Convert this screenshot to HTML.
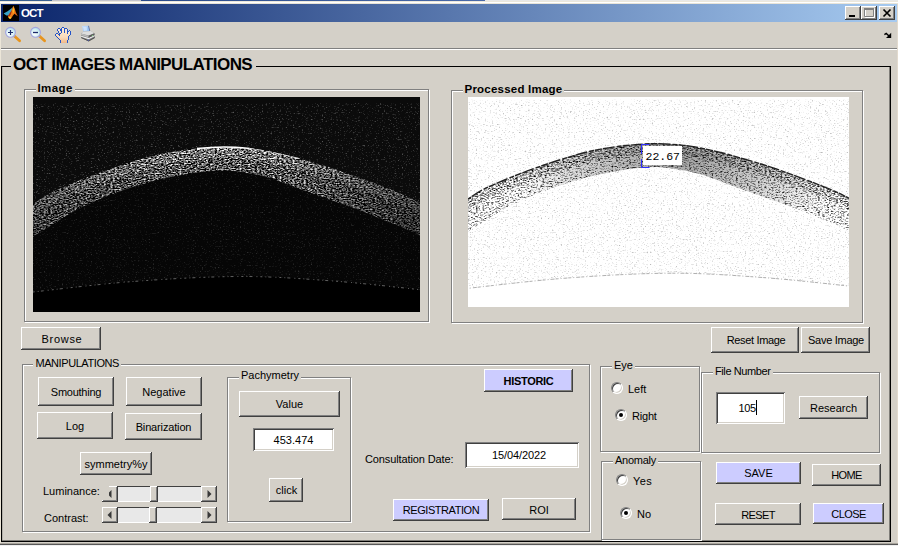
<!DOCTYPE html>
<html>
<head>
<meta charset="utf-8">
<title>OCT</title>
<style>
html,body{margin:0;padding:0;}
body{width:898px;height:546px;overflow:hidden;background:#d4d0c8;position:relative;font-family:"Liberation Sans",sans-serif;font-size:11px;color:#000;}
.abs{position:absolute;}
.btn{position:absolute;box-sizing:border-box;background:#d4d0c8;text-align:center;white-space:nowrap;
 box-shadow:inset -1px -1px 0 #404040, inset 1px 1px 0 #ffffff, inset -2px -2px 0 #808080;}
.btn span{position:absolute;left:0;right:0;text-align:center;}
.lav{background:#ccccff;}
.edit{position:absolute;box-sizing:border-box;background:#fff;text-align:center;white-space:nowrap;
 box-shadow:inset 1px 1px 0 #808080, inset -1px -1px 0 #ffffff, inset 2px 2px 0 #404040, inset -2px -2px 0 #d4d0c8;}
.grp{position:absolute;box-sizing:border-box;border:1px solid #808080;box-shadow:1px 1px 0 #fff, inset 1px 1px 0 #fff;}
.lbl{position:absolute;background:#d4d0c8;white-space:nowrap;line-height:13px;padding:0 2px;}
.txt{position:absolute;white-space:nowrap;line-height:13px;}
.radio{position:absolute;width:12px;height:12px;box-sizing:border-box;border-radius:50%;background:#fff;
 border:1px solid #808080;border-right-color:#fff;border-bottom-color:#fff;box-shadow:inset 1px 1px 0 #404040, inset -1px -1px 0 #d4d0c8;}
.radio.on::after{content:"";position:absolute;left:3px;top:3px;width:4px;height:4px;border-radius:50%;background:#000;}
.sl{position:absolute;height:16px;background:#e8e8e8;box-shadow:inset 0 1px 0 #404040, inset 0 -1px 0 #ffffff;}
.sb{position:absolute;top:0;width:16px;height:16px;box-sizing:border-box;background:#d4d0c8;box-shadow:inset -1px -1px 0 #404040, inset 1px 1px 0 #ffffff, inset -2px -2px 0 #808080;}
.th{position:absolute;top:0;width:8px;height:16px;box-sizing:border-box;background:#d4d0c8;box-shadow:inset -1px -1px 0 #404040, inset 1px 1px 0 #ffffff, inset -2px -2px 0 #808080;}
</style>
</head>
<body>
<!-- stray strip above window -->
<div class="abs" style="left:0;top:0;width:898px;height:1px;background:linear-gradient(to right,#3a6090 0,#3a6090 52px,#c4c4cc 52px,#c4c4cc 141px,#2a4a88 141px,#4a6aa8 485px,#e8e8e8 485px,#e8e8e8 898px);"></div>
<div class="abs" style="left:0;top:1px;width:898px;height:1px;background:#ece8dc;"></div>
<div class="abs" style="left:0;top:2px;width:898px;height:1px;background:#ffffff;"></div>
<div class="abs" style="left:0;top:3px;width:898px;height:1px;background:#e8e4d8;"></div>
<!-- title bar -->
<div class="abs" style="left:1px;top:4px;width:896px;height:18px;background:linear-gradient(to right,#0a246a 0%,#a6caf0 100%);"></div>
<div class="abs" style="left:0;top:4px;width:1px;height:542px;background:#ece6d8;"></div>
<div class="abs" style="left:897px;top:4px;width:1px;height:542px;background:#e2dace;"></div>
<svg class="abs" style="left:3px;top:5px;" width="16" height="16" viewBox="0 0 16 16">
<defs><linearGradient id="mo" x1="0" y1="0" x2="1" y2="1"><stop offset="0" stop-color="#c8401a"/><stop offset="0.5" stop-color="#f08418"/><stop offset="1" stop-color="#d04a10"/></linearGradient></defs>
<rect width="16" height="16" fill="#000"/>
<path d="M0.6,8.6 L4.6,6.2 L8.3,3.6 L9.6,2.2 L8.8,6.5 L5.6,10.6 L3.4,10.6 Z" fill="#38a4c8"/>
<path d="M4.8,10.9 L8,6.6 L10.3,0.8 L11.6,3.2 L12.8,7.2 L14.8,11.2 L13,9.9 L11.6,8.7 L10,10.6 L8.5,12.9 L7,13.9 L5.6,13 Z" fill="url(#mo)"/>
<path d="M10.3,1 L11,5 L10.4,8.8 L9.5,6 Z" fill="#fac028"/>
<path d="M5.6,12.3 L7,13.9 L8.3,13 L6.8,11.6 Z" fill="#fbd030"/>
<path d="M4.8,10.9 L8,6.6 L9,5 L8,9 L6.4,11.4 Z" fill="#9c2c10"/>
</svg>
<div class="txt" style="left:21px;top:6px;color:#fff;font-weight:bold;font-size:11.5px;line-height:14px;letter-spacing:-0.9px;">OCT</div>
<div class="btn" style="left:845px;top:6px;width:16px;height:14px;"></div>
<div class="abs" style="left:849px;top:15px;width:6px;height:2px;background:#000;"></div>
<div class="btn" style="left:861px;top:6px;width:16px;height:14px;"></div>
<svg class="abs" style="left:861px;top:6px;" width="16" height="14"><path d="M4.5,3.5 H13.5 V11.5 H4.5 Z M4,3 H14" fill="none" stroke="#fff" stroke-width="1"/><path d="M3.5,2.5 H12.5 V10.5 H3.5 Z" fill="none" stroke="#808080" stroke-width="1"/><rect x="3" y="2" width="10" height="2" fill="#808080"/></svg>
<div class="btn" style="left:879px;top:6px;width:16px;height:14px;"></div>
<svg class="abs" style="left:879px;top:6px;" width="16" height="14"><path d="M4.5,3.5 L11.5,10.5 M11.5,3.5 L4.5,10.5" fill="none" stroke="#000" stroke-width="1.7"/></svg>
<svg class="abs" style="left:0;top:24px;" width="100" height="22" viewBox="0 24 100 22">
<defs>
<radialGradient id="ln" cx="0.4" cy="0.65" r="0.7"><stop offset="0" stop-color="#ffffff"/><stop offset="0.6" stop-color="#d4f0f4"/><stop offset="1" stop-color="#a8dce8"/></radialGradient>
<linearGradient id="sk" x1="0" y1="0" x2="0" y2="1"><stop offset="0" stop-color="#fdebd6"/><stop offset="0.6" stop-color="#fbdcbc"/><stop offset="1" stop-color="#f0b888"/></linearGradient>
<linearGradient id="pp" x1="0" y1="0" x2="1" y2="1"><stop offset="0" stop-color="#c8e0fc"/><stop offset="1" stop-color="#88bcf4"/></linearGradient>
</defs>
<!-- zoom in -->
<path d="M14.6,36.2 L19.6,40.8" stroke="#e8941c" stroke-width="2.8" stroke-linecap="round"/>
<path d="M13.2,35 L15,36.6" stroke="#a0a0b8" stroke-width="1.6"/>
<circle cx="10.5" cy="32.3" r="4.9" fill="url(#ln)" stroke="#a4a4e0" stroke-width="1.1"/>
<path d="M8,32.5 H13 M10.5,30 V35" stroke="#1c2c6c" stroke-width="1.2"/>
<!-- zoom out -->
<path d="M39.6,36.2 L44.6,40.8" stroke="#e8941c" stroke-width="2.8" stroke-linecap="round"/>
<path d="M38.2,35 L40,36.6" stroke="#a0a0b8" stroke-width="1.6"/>
<circle cx="35.5" cy="32.3" r="4.9" fill="url(#ln)" stroke="#a4a4e0" stroke-width="1.1"/>
<path d="M33,32.5 H38" stroke="#1c2c6c" stroke-width="1.3"/>
<!-- hand -->
<g transform="translate(55,27)"><path d="M7,1h2v1h-2zM3,2h2v1h-2zM7,2h2v1h-2zM10,2h2v1h-2zM3,3h2v1h-2zM7,3h2v1h-2zM10,3h2v1h-2zM4,4h2v1h-2zM7,4h2v1h-2zM10,4h2v1h-2zM14,4h1v1h-1zM4,5h2v1h-2zM7,5h2v1h-2zM10,5h2v1h-2zM13,5h2v1h-2zM6,6h6v1h-6zM13,6h2v1h-2zM1,7h2v1h-2zM5,7h10v1h-10zM1,8h3v1h-3zM5,8h9v1h-9zM2,9h11v1h-11zM3,10h10v1h-10zM4,11h9v1h-9zM5,12h8v1h-8zM6,13h6v1h-6zM6,14h6v1h-6zM6,15h6v1h-6z" fill="url(#sk)"/><path d="M7,0h2v1h-2zM3,1h2v1h-2zM6,1h1v1h-1zM9,1h3v1h-3zM2,2h1v1h-1zM5,2h2v1h-2zM9,2h1v1h-1zM12,2h1v1h-1zM2,3h1v1h-1zM5,3h2v1h-2zM9,3h1v1h-1zM12,3h1v1h-1zM14,3h1v1h-1zM3,4h1v1h-1zM6,4h1v1h-1zM9,4h1v1h-1zM12,4h2v1h-2zM15,4h1v1h-1zM3,5h1v1h-1zM6,5h1v1h-1zM9,5h1v1h-1zM12,5h1v1h-1zM15,5h1v1h-1zM1,6h2v1h-2zM4,6h2v1h-2zM12,6h1v1h-1zM15,6h1v1h-1zM0,7h1v1h-1zM3,7h2v1h-2zM15,7h1v1h-1zM0,8h1v1h-1zM4,8h1v1h-1zM14,8h1v1h-1zM1,9h1v1h-1zM13,9h1v1h-1zM2,10h1v1h-1zM13,10h1v1h-1zM3,11h1v1h-1zM13,11h1v1h-1zM4,12h1v1h-1zM13,12h1v1h-1zM5,13h1v1h-1zM12,13h1v1h-1zM5,14h1v1h-1zM12,14h1v1h-1zM5,15h1v1h-1zM12,15h1v1h-1z" fill="#2454c8"/></g>
<!-- printer -->
<g transform="translate(80,25)">
<path d="M1.6,13 L8.8,16.4 L15,13 L15,11 L8.6,14 Z" fill="#303030" fill-opacity="0.55"/>
<path d="M2,1.1 L8.5,0.8 L9.9,6.4 L3.3,6.9 Z" fill="url(#pp)"/>
<path d="M3.2,2 L6.5,1.8 L7.2,5.6 L4,5.9 Z" fill="#e6f0ff" fill-opacity="0.6"/>
<path d="M8.5,0.8 L9.9,6.4" stroke="#5c6c9c" stroke-width="0.9" fill="none"/>
<path d="M1,8.4 L3.4,6.6 L11,6 L14.4,8.2 L14.5,12.6 L8.6,15.8 L1.1,12.6 Z" fill="#8c8c8c"/>
<path d="M1,8.4 L3.4,6.6 L11,6 L14.4,8.2 L8.6,10.6 Z" fill="#dedede"/>
<path d="M1,8.6 L8.6,10.9 L8.6,12.4 L1,10.1 Z" fill="#bcbcbc"/>
<path d="M1.1,10.7 L8.6,13 L14.5,10.2 L14.5,11.3 L8.6,14.3 L1.1,11.8 Z" fill="#f2f2f2"/>
<path d="M8.6,10.8 L14.4,8.3 L14.5,10.1 L8.6,12.7 Z" fill="#5c5c5c"/>
<rect x="12" y="10.1" width="1" height="1" fill="#78d078"/>
<path d="M1.1,12.6 L8.6,15.8 L14.5,12.6" fill="none" stroke="#484848" stroke-width="0.9"/>
<rect x="7.6" y="14.6" width="1.4" height="1" fill="#4858c0"/>
</g>
</svg>
<svg class="abs" style="left:882px;top:31px;" width="12" height="9" viewBox="882 31 12 9"><path d="M891.2,32.8 V38 H886 Z" fill="#000"/><path d="M884.4,34.6 L886.2,33.4 L889.6,36.6" fill="none" stroke="#000" stroke-width="1.4"/></svg>
<div class="abs" style="left:1px;top:48px;width:896px;height:1px;background:#808080;"></div>
<div class="abs" style="left:1px;top:49px;width:896px;height:1px;background:#ffffff;"></div>

<!-- main panel -->
<div class="abs" style="left:1px;top:66px;width:890px;height:476px;box-sizing:border-box;border:1px solid #000;"></div>
<div class="abs" style="left:889px;top:67px;width:1px;height:474px;background:rgba(0,0,0,0.4);"></div>
<div class="abs" style="left:2px;top:540px;width:887px;height:1px;background:rgba(0,0,0,0.4);"></div>
<div class="abs" style="left:2px;top:67px;width:1px;height:473px;background:rgba(0,0,0,0.15);"></div>
<div class="lbl" style="left:11px;top:55px;font-weight:bold;font-size:17px;letter-spacing:-0.57px;line-height:20px;padding:0 4px 0 2px;">OCT IMAGES MANIPULATIONS</div>

<!-- Image panel -->
<div class="grp" style="left:24px;top:89px;width:405px;height:233px;"></div>
<div class="lbl" style="left:35.5px;top:81px;font-weight:bold;font-size:11.5px;letter-spacing:0.4px;line-height:14px;">Image</div>
<!--IMG1-->
<svg class="abs" style="left:33px;top:97px;" width="387" height="215" viewBox="0 0 387 215">
<defs>
<filter id="f1" x="0" y="0" width="100%" height="100%" color-interpolation-filters="sRGB">
<feTurbulence type="fractalNoise" baseFrequency="0.55 0.85" numOctaves="2" seed="4" result="t"/>
<feColorMatrix in="t" type="matrix" values="0 0 0 0 1  0 0 0 0 1  0 0 0 0 1  1.1 0 0 0 -0.65"/>
<feComposite operator="in" in2="SourceAlpha"/>
</filter>
<filter id="f2" x="0" y="0" width="100%" height="100%" color-interpolation-filters="sRGB">
<feTurbulence type="fractalNoise" baseFrequency="0.45 0.8" numOctaves="2" seed="11" result="t"/>
<feColorMatrix in="t" type="matrix" values="2.3 0 0 0 -0.82  2.3 0 0 0 -0.82  2.3 0 0 0 -0.82  0 0 0 0 1"/><feGaussianBlur stdDeviation="0.45"/>
<feComposite operator="in" in2="SourceAlpha"/>
</filter>
<filter id="f3" x="0" y="0" width="100%" height="100%" color-interpolation-filters="sRGB">
<feTurbulence type="fractalNoise" baseFrequency="0.45 0.8" numOctaves="2" seed="11" result="t"/>
<feColorMatrix in="t" type="matrix" values="2.3 0 0 0 -0.7  2.3 0 0 0 -0.7  2.3 0 0 0 -0.7  0 0 0 0 1"/><feGaussianBlur stdDeviation="0.45"/>
<feComposite operator="in" in2="SourceAlpha"/>
</filter>
<linearGradient id="lg" x1="0" x2="1" y1="0" y2="0"><stop offset="0" stop-color="#000" stop-opacity="0.35"/><stop offset="0.35" stop-color="#000" stop-opacity="0"/><stop offset="0.62" stop-color="#000" stop-opacity="0"/><stop offset="1" stop-color="#000" stop-opacity="0.5"/></linearGradient>
<clipPath id="ca"><path d="M0.0,107.0 C0.5,106.7 0.1,107.1 3.0,105.3 C5.9,103.5 11.2,99.5 17.3,96.3 C23.4,93.1 32.1,89.4 39.5,86.3 C46.9,83.2 54.4,80.3 61.8,77.5 C69.2,74.7 76.6,72.2 84.0,69.7 C91.4,67.2 99.0,64.8 106.4,62.6 C113.8,60.5 121.2,58.4 128.6,56.8 C136.0,55.2 143.6,54.0 151.0,53.0 C158.4,52.0 166.3,51.3 173.0,50.8 C179.7,50.3 183.7,49.8 191.0,49.9 C198.3,50.0 209.4,50.7 216.7,51.4 C223.9,52.1 227.8,52.8 234.5,54.1 C241.2,55.4 249.4,57.1 256.8,59.0 C264.2,60.9 271.6,63.1 279.0,65.3 C286.4,67.5 294.0,69.5 301.4,71.9 C308.8,74.3 316.2,77.0 323.6,79.7 C331.0,82.4 338.5,85.1 345.9,88.0 C353.3,90.9 362.0,94.2 368.2,96.9 C374.4,99.6 380.2,102.7 383.3,104.2 C386.4,105.7 386.4,105.7 387.0,106.0 L387.0,138.2 C386.4,137.9 386.4,137.9 383.3,136.5 C380.2,135.1 374.4,132.4 368.2,129.8 C362.0,127.2 353.3,123.9 345.9,120.9 C338.5,117.9 331.0,114.8 323.6,112.0 C316.2,109.2 308.8,106.9 301.4,104.3 C294.0,101.7 286.4,99.0 279.0,96.3 C271.6,93.6 264.2,90.7 256.8,88.0 C249.4,85.3 241.2,82.2 234.5,80.3 C227.8,78.3 223.3,77.4 216.7,76.3 C210.1,75.2 202.3,73.8 195.0,73.5 C187.7,73.2 180.3,73.7 173.0,74.4 C165.7,75.1 158.4,76.2 151.0,77.5 C143.6,78.8 136.0,80.2 128.6,82.0 C121.2,83.8 113.8,85.8 106.4,88.0 C99.0,90.2 91.4,92.6 84.0,95.3 C76.6,98.0 69.2,100.9 61.8,104.2 C54.4,107.5 47.0,110.9 39.5,115.0 C32.0,119.1 23.1,125.2 17.0,129.0 C10.9,132.8 5.8,135.9 3.0,137.7 C0.2,139.4 0.5,139.2 0.0,139.5 Z"/></clipPath>
</defs>
<rect width="387" height="215" fill="#000"/>
<path d="M0,6 L387,6 L387,192.7 L387.0,192.7 C372.5,191.2 330.0,186.2 300.0,184.0 C270.0,181.8 240.3,179.4 207.0,179.5 C173.7,179.6 134.5,181.9 100.0,184.5 C65.5,187.1 16.7,193.2 0.0,195.0 Z" fill="#0b0b0b"/><rect width="387" height="6" fill="#0b0b0b"/>
<path d="M0,6 L387,6 L387,192.7 L387.0,192.7 C372.5,191.2 330.0,186.2 300.0,184.0 C270.0,181.8 240.3,179.4 207.0,179.5 C173.7,179.6 134.5,181.9 100.0,184.5 C65.5,187.1 16.7,193.2 0.0,195.0 Z" fill="#000" filter="url(#f1)"/>
<path d="M0.0,139.5 C0.5,139.2 0.2,139.4 3.0,137.7 C5.8,135.9 10.9,132.8 17.0,129.0 C23.1,125.2 32.0,119.1 39.5,115.0 C47.0,110.9 54.4,107.5 61.8,104.2 C69.2,100.9 76.6,98.0 84.0,95.3 C91.4,92.6 99.0,90.2 106.4,88.0 C113.8,85.8 121.2,83.8 128.6,82.0 C136.0,80.2 143.6,78.8 151.0,77.5 C158.4,76.2 165.7,75.1 173.0,74.4 C180.3,73.7 187.7,73.2 195.0,73.5 C202.3,73.8 210.1,75.2 216.7,76.3 C223.3,77.4 227.8,78.3 234.5,80.3 C241.2,82.2 249.4,85.3 256.8,88.0 C264.2,90.7 271.6,93.6 279.0,96.3 C286.4,99.0 294.0,101.7 301.4,104.3 C308.8,106.9 316.2,109.2 323.6,112.0 C331.0,114.8 338.5,117.9 345.9,120.9 C353.3,123.9 362.0,127.2 368.2,129.8 C374.4,132.4 380.2,135.1 383.3,136.5 C386.4,137.9 386.4,137.9 387.0,138.2 L387,215 L0,215 Z" fill="#000" fill-opacity="0.45"/>
<path d="M0.0,107.0 C0.5,106.7 0.1,107.1 3.0,105.3 C5.9,103.5 11.2,99.5 17.3,96.3 C23.4,93.1 32.1,89.4 39.5,86.3 C46.9,83.2 54.4,80.3 61.8,77.5 C69.2,74.7 76.6,72.2 84.0,69.7 C91.4,67.2 99.0,64.8 106.4,62.6 C113.8,60.5 121.2,58.4 128.6,56.8 C136.0,55.2 143.6,54.0 151.0,53.0 C158.4,52.0 166.3,51.3 173.0,50.8 C179.7,50.3 183.7,49.8 191.0,49.9 C198.3,50.0 209.4,50.7 216.7,51.4 C223.9,52.1 227.8,52.8 234.5,54.1 C241.2,55.4 249.4,57.1 256.8,59.0 C264.2,60.9 271.6,63.1 279.0,65.3 C286.4,67.5 294.0,69.5 301.4,71.9 C308.8,74.3 316.2,77.0 323.6,79.7 C331.0,82.4 338.5,85.1 345.9,88.0 C353.3,90.9 362.0,94.2 368.2,96.9 C374.4,99.6 380.2,102.7 383.3,104.2 C386.4,105.7 386.4,105.7 387.0,106.0 L387.0,138.2 C386.4,137.9 386.4,137.9 383.3,136.5 C380.2,135.1 374.4,132.4 368.2,129.8 C362.0,127.2 353.3,123.9 345.9,120.9 C338.5,117.9 331.0,114.8 323.6,112.0 C316.2,109.2 308.8,106.9 301.4,104.3 C294.0,101.7 286.4,99.0 279.0,96.3 C271.6,93.6 264.2,90.7 256.8,88.0 C249.4,85.3 241.2,82.2 234.5,80.3 C227.8,78.3 223.3,77.4 216.7,76.3 C210.1,75.2 202.3,73.8 195.0,73.5 C187.7,73.2 180.3,73.7 173.0,74.4 C165.7,75.1 158.4,76.2 151.0,77.5 C143.6,78.8 136.0,80.2 128.6,82.0 C121.2,83.8 113.8,85.8 106.4,88.0 C99.0,90.2 91.4,92.6 84.0,95.3 C76.6,98.0 69.2,100.9 61.8,104.2 C54.4,107.5 47.0,110.9 39.5,115.0 C32.0,119.1 23.1,125.2 17.0,129.0 C10.9,132.8 5.8,135.9 3.0,137.7 C0.2,139.4 0.5,139.2 0.0,139.5 Z" fill="#000" filter="url(#f2)"/>
<g clip-path="url(#ca)"><path d="M0.0,107.0 C0.5,106.7 0.1,107.1 3.0,105.3 C5.9,103.5 11.2,99.5 17.3,96.3 C23.4,93.1 32.1,89.4 39.5,86.3 C46.9,83.2 54.4,80.3 61.8,77.5 C69.2,74.7 76.6,72.2 84.0,69.7 C91.4,67.2 99.0,64.8 106.4,62.6 C113.8,60.5 121.2,58.4 128.6,56.8 C136.0,55.2 143.6,54.0 151.0,53.0 C158.4,52.0 166.3,51.3 173.0,50.8 C179.7,50.3 183.7,49.8 191.0,49.9 C198.3,50.0 209.4,50.7 216.7,51.4 C223.9,52.1 227.8,52.8 234.5,54.1 C241.2,55.4 249.4,57.1 256.8,59.0 C264.2,60.9 271.6,63.1 279.0,65.3 C286.4,67.5 294.0,69.5 301.4,71.9 C308.8,74.3 316.2,77.0 323.6,79.7 C331.0,82.4 338.5,85.1 345.9,88.0 C353.3,90.9 362.0,94.2 368.2,96.9 C374.4,99.6 380.2,102.7 383.3,104.2 C386.4,105.7 386.4,105.7 387.0,106.0 L387.0,117.0 C386.4,116.7 386.4,116.7 383.3,115.2 C380.2,113.7 374.4,110.6 368.2,107.9 C362.0,105.2 353.3,101.9 345.9,99.0 C338.5,96.1 331.0,93.4 323.6,90.7 C316.2,88.0 308.8,85.3 301.4,82.9 C294.0,80.5 286.4,78.5 279.0,76.3 C271.6,74.1 264.2,71.9 256.8,70.0 C249.4,68.1 241.2,66.4 234.5,65.1 C227.8,63.8 223.9,63.1 216.7,62.4 C209.4,61.7 198.3,61.0 191.0,60.9 C183.7,60.8 179.7,61.3 173.0,61.8 C166.3,62.3 158.4,63.0 151.0,64.0 C143.6,65.0 136.0,66.2 128.6,67.8 C121.2,69.4 113.8,71.4 106.4,73.6 C99.0,75.8 91.4,78.2 84.0,80.7 C76.6,83.2 69.2,85.7 61.8,88.5 C54.4,91.3 46.9,94.2 39.5,97.3 C32.1,100.4 23.4,104.1 17.3,107.3 C11.2,110.5 5.9,114.5 3.0,116.3 C0.1,118.1 0.5,117.7 0.0,118.0 Z" fill="#000" filter="url(#f3)"/><rect width="387" height="215" fill="url(#lg)"/></g>
<path d="M0.0,195.0 C16.7,193.2 65.5,187.1 100.0,184.5 C134.5,181.9 173.7,179.6 207.0,179.5 C240.3,179.4 270.0,181.8 300.0,184.0 C330.0,186.2 372.5,191.2 387.0,192.7" fill="none" stroke="#606060" stroke-width="1" stroke-dasharray="2 3 1 2 3 4 1 3"/>
<path d="M164,51.6 C173,50.6 182,50 191,50 C200,50 210,50.8 216.7,51.4" fill="none" stroke="#fff" stroke-width="1.5"/><path d="M216.7,51.4 C226,52.6 246,56.4 268,62" fill="none" stroke="#ddd" stroke-width="1" stroke-dasharray="5 2 8 3"/>
</svg>
<!--/IMG1-->

<!-- Processed Image panel -->
<div class="grp" style="left:451px;top:90px;width:412px;height:233px;"></div>
<div class="lbl" style="left:462.5px;top:82px;font-weight:bold;font-size:11.5px;letter-spacing:0.22px;line-height:14px;">Processed Image</div>
<!--IMG2-->
<svg class="abs" style="left:468px;top:97px;" width="381" height="210" viewBox="3 3.3 381 210">
<defs>
<filter id="g1" x="0" y="0" width="100%" height="100%" color-interpolation-filters="sRGB">
<feTurbulence type="fractalNoise" baseFrequency="0.55 0.85" numOctaves="2" seed="4" result="t"/>
<feColorMatrix in="t" type="matrix" values="0 0 0 0 0  0 0 0 0 0  0 0 0 0 0  0.9 0 0 0 -0.52"/>
<feComposite operator="in" in2="SourceAlpha"/>
</filter>
<filter id="g2" x="0" y="0" width="100%" height="100%" color-interpolation-filters="sRGB">
<feTurbulence type="fractalNoise" baseFrequency="0.45 0.8" numOctaves="2" seed="11" result="t"/>
<feColorMatrix in="t" type="matrix" values="-2.4 0 0 0 2.12  -2.4 0 0 0 2.12  -2.4 0 0 0 2.12  0 0 0 0 1"/><feGaussianBlur stdDeviation="0.4"/>
<feComposite operator="in" in2="SourceAlpha"/>
</filter>
<filter id="g3" x="0" y="0" width="100%" height="100%" color-interpolation-filters="sRGB">
<feTurbulence type="fractalNoise" baseFrequency="0.45 0.8" numOctaves="2" seed="11" result="t"/>
<feColorMatrix in="t" type="matrix" values="-2.4 0 0 0 1.92  -2.4 0 0 0 1.92  -2.4 0 0 0 1.92  0 0 0 0 1"/><feGaussianBlur stdDeviation="0.4"/>
<feComposite operator="in" in2="SourceAlpha"/>
</filter>
<clipPath id="cb"><path d="M0.0,107.0 C0.5,106.7 0.1,107.1 3.0,105.3 C5.9,103.5 11.2,99.5 17.3,96.3 C23.4,93.1 32.1,89.4 39.5,86.3 C46.9,83.2 54.4,80.3 61.8,77.5 C69.2,74.7 76.6,72.2 84.0,69.7 C91.4,67.2 99.0,64.8 106.4,62.6 C113.8,60.5 121.2,58.4 128.6,56.8 C136.0,55.2 143.6,54.0 151.0,53.0 C158.4,52.0 166.3,51.3 173.0,50.8 C179.7,50.3 183.7,49.8 191.0,49.9 C198.3,50.0 209.4,50.7 216.7,51.4 C223.9,52.1 227.8,52.8 234.5,54.1 C241.2,55.4 249.4,57.1 256.8,59.0 C264.2,60.9 271.6,63.1 279.0,65.3 C286.4,67.5 294.0,69.5 301.4,71.9 C308.8,74.3 316.2,77.0 323.6,79.7 C331.0,82.4 338.5,85.1 345.9,88.0 C353.3,90.9 362.0,94.2 368.2,96.9 C374.4,99.6 380.2,102.7 383.3,104.2 C386.4,105.7 386.4,105.7 387.0,106.0 L387.0,138.2 C386.4,137.9 386.4,137.9 383.3,136.5 C380.2,135.1 374.4,132.4 368.2,129.8 C362.0,127.2 353.3,123.9 345.9,120.9 C338.5,117.9 331.0,114.8 323.6,112.0 C316.2,109.2 308.8,106.9 301.4,104.3 C294.0,101.7 286.4,99.0 279.0,96.3 C271.6,93.6 264.2,90.7 256.8,88.0 C249.4,85.3 241.2,82.2 234.5,80.3 C227.8,78.3 223.3,77.4 216.7,76.3 C210.1,75.2 202.3,73.8 195.0,73.5 C187.7,73.2 180.3,73.7 173.0,74.4 C165.7,75.1 158.4,76.2 151.0,77.5 C143.6,78.8 136.0,80.2 128.6,82.0 C121.2,83.8 113.8,85.8 106.4,88.0 C99.0,90.2 91.4,92.6 84.0,95.3 C76.6,98.0 69.2,100.9 61.8,104.2 C54.4,107.5 47.0,110.9 39.5,115.0 C32.0,119.1 23.1,125.2 17.0,129.0 C10.9,132.8 5.8,135.9 3.0,137.7 C0.2,139.4 0.5,139.2 0.0,139.5 Z"/></clipPath>
<radialGradient id="rg" gradientUnits="userSpaceOnUse" cx="215" cy="62" r="170" gradientTransform="translate(0,62) scale(1,0.5) translate(0,-62)">
<stop offset="0" stop-color="#000" stop-opacity="0.38"/><stop offset="0.5" stop-color="#000" stop-opacity="0.2"/><stop offset="1" stop-color="#000" stop-opacity="0"/></radialGradient>
</defs>
<rect width="387" height="215" fill="#fff"/>
<path d="M0,6 L387,6 L387,192.7 L387.0,192.7 C372.5,191.2 330.0,186.2 300.0,184.0 C270.0,181.8 240.3,179.4 207.0,179.5 C173.7,179.6 134.5,181.9 100.0,184.5 C65.5,187.1 16.7,193.2 0.0,195.0 Z" fill="#000" filter="url(#g1)"/>
<path d="M0.0,107.0 C0.5,106.7 0.1,107.1 3.0,105.3 C5.9,103.5 11.2,99.5 17.3,96.3 C23.4,93.1 32.1,89.4 39.5,86.3 C46.9,83.2 54.4,80.3 61.8,77.5 C69.2,74.7 76.6,72.2 84.0,69.7 C91.4,67.2 99.0,64.8 106.4,62.6 C113.8,60.5 121.2,58.4 128.6,56.8 C136.0,55.2 143.6,54.0 151.0,53.0 C158.4,52.0 166.3,51.3 173.0,50.8 C179.7,50.3 183.7,49.8 191.0,49.9 C198.3,50.0 209.4,50.7 216.7,51.4 C223.9,52.1 227.8,52.8 234.5,54.1 C241.2,55.4 249.4,57.1 256.8,59.0 C264.2,60.9 271.6,63.1 279.0,65.3 C286.4,67.5 294.0,69.5 301.4,71.9 C308.8,74.3 316.2,77.0 323.6,79.7 C331.0,82.4 338.5,85.1 345.9,88.0 C353.3,90.9 362.0,94.2 368.2,96.9 C374.4,99.6 380.2,102.7 383.3,104.2 C386.4,105.7 386.4,105.7 387.0,106.0 L387.0,138.2 C386.4,137.9 386.4,137.9 383.3,136.5 C380.2,135.1 374.4,132.4 368.2,129.8 C362.0,127.2 353.3,123.9 345.9,120.9 C338.5,117.9 331.0,114.8 323.6,112.0 C316.2,109.2 308.8,106.9 301.4,104.3 C294.0,101.7 286.4,99.0 279.0,96.3 C271.6,93.6 264.2,90.7 256.8,88.0 C249.4,85.3 241.2,82.2 234.5,80.3 C227.8,78.3 223.3,77.4 216.7,76.3 C210.1,75.2 202.3,73.8 195.0,73.5 C187.7,73.2 180.3,73.7 173.0,74.4 C165.7,75.1 158.4,76.2 151.0,77.5 C143.6,78.8 136.0,80.2 128.6,82.0 C121.2,83.8 113.8,85.8 106.4,88.0 C99.0,90.2 91.4,92.6 84.0,95.3 C76.6,98.0 69.2,100.9 61.8,104.2 C54.4,107.5 47.0,110.9 39.5,115.0 C32.0,119.1 23.1,125.2 17.0,129.0 C10.9,132.8 5.8,135.9 3.0,137.7 C0.2,139.4 0.5,139.2 0.0,139.5 Z" fill="#000" filter="url(#g2)"/>
<g clip-path="url(#cb)"><path d="M0.0,107.0 C0.5,106.7 0.1,107.1 3.0,105.3 C5.9,103.5 11.2,99.5 17.3,96.3 C23.4,93.1 32.1,89.4 39.5,86.3 C46.9,83.2 54.4,80.3 61.8,77.5 C69.2,74.7 76.6,72.2 84.0,69.7 C91.4,67.2 99.0,64.8 106.4,62.6 C113.8,60.5 121.2,58.4 128.6,56.8 C136.0,55.2 143.6,54.0 151.0,53.0 C158.4,52.0 166.3,51.3 173.0,50.8 C179.7,50.3 183.7,49.8 191.0,49.9 C198.3,50.0 209.4,50.7 216.7,51.4 C223.9,52.1 227.8,52.8 234.5,54.1 C241.2,55.4 249.4,57.1 256.8,59.0 C264.2,60.9 271.6,63.1 279.0,65.3 C286.4,67.5 294.0,69.5 301.4,71.9 C308.8,74.3 316.2,77.0 323.6,79.7 C331.0,82.4 338.5,85.1 345.9,88.0 C353.3,90.9 362.0,94.2 368.2,96.9 C374.4,99.6 380.2,102.7 383.3,104.2 C386.4,105.7 386.4,105.7 387.0,106.0 L387.0,117.0 C386.4,116.7 386.4,116.7 383.3,115.2 C380.2,113.7 374.4,110.6 368.2,107.9 C362.0,105.2 353.3,101.9 345.9,99.0 C338.5,96.1 331.0,93.4 323.6,90.7 C316.2,88.0 308.8,85.3 301.4,82.9 C294.0,80.5 286.4,78.5 279.0,76.3 C271.6,74.1 264.2,71.9 256.8,70.0 C249.4,68.1 241.2,66.4 234.5,65.1 C227.8,63.8 223.9,63.1 216.7,62.4 C209.4,61.7 198.3,61.0 191.0,60.9 C183.7,60.8 179.7,61.3 173.0,61.8 C166.3,62.3 158.4,63.0 151.0,64.0 C143.6,65.0 136.0,66.2 128.6,67.8 C121.2,69.4 113.8,71.4 106.4,73.6 C99.0,75.8 91.4,78.2 84.0,80.7 C76.6,83.2 69.2,85.7 61.8,88.5 C54.4,91.3 46.9,94.2 39.5,97.3 C32.1,100.4 23.4,104.1 17.3,107.3 C11.2,110.5 5.9,114.5 3.0,116.3 C0.1,118.1 0.5,117.7 0.0,118.0 Z" fill="#000" filter="url(#g3)"/><rect width="387" height="215" fill="url(#rg)"/></g>
<path d="M0.0,195.0 C16.7,193.2 65.5,187.1 100.0,184.5 C134.5,181.9 173.7,179.6 207.0,179.5 C240.3,179.4 270.0,181.8 300.0,184.0 C330.0,186.2 372.5,191.2 387.0,192.7" fill="none" stroke="#b0b0b0" stroke-width="1" stroke-dasharray="3 2 1 2 4 1"/>
<path d="M0.0,107.0 C0.5,106.7 0.1,107.1 3.0,105.3 C5.9,103.5 11.2,99.5 17.3,96.3 C23.4,93.1 32.1,89.4 39.5,86.3 C46.9,83.2 54.4,80.3 61.8,77.5 C69.2,74.7 76.6,72.2 84.0,69.7 C91.4,67.2 99.0,64.8 106.4,62.6 C113.8,60.5 121.2,58.4 128.6,56.8 C136.0,55.2 143.6,54.0 151.0,53.0 C158.4,52.0 166.3,51.3 173.0,50.8 C179.7,50.3 183.7,49.8 191.0,49.9 C198.3,50.0 209.4,50.7 216.7,51.4 C223.9,52.1 227.8,52.8 234.5,54.1 C241.2,55.4 249.4,57.1 256.8,59.0 C264.2,60.9 271.6,63.1 279.0,65.3 C286.4,67.5 294.0,69.5 301.4,71.9 C308.8,74.3 316.2,77.0 323.6,79.7 C331.0,82.4 338.5,85.1 345.9,88.0 C353.3,90.9 362.0,94.2 368.2,96.9 C374.4,99.6 380.2,102.7 383.3,104.2 C386.4,105.7 386.4,105.7 387.0,106.0" fill="none" stroke="#222" stroke-width="1.4" stroke-dasharray="7 1 12 2 5 1"/>
</svg>
<div class="abs" style="left:643px;top:146px;width:39px;height:19px;background:#fff;"></div>
<div class="txt" style="left:645.5px;top:149.7px;font-family:'Liberation Mono',monospace;font-size:11.5px;line-height:14px;">22.67</div>
<svg class="abs" style="left:640px;top:143px;" width="12" height="27"><path d="M9.5,1.5 H1.5 V11 M1.5,16 V24.5 H9.5" fill="none" stroke="#3030ff" stroke-width="1"/></svg>
<!--/IMG2-->

<!-- buttons row -->
<div class="btn" style="left:21px;top:327px;width:80px;height:23px;"><span style="top:6px;left:2px;letter-spacing:0.7px;">Browse</span></div>
<div class="btn" style="left:711px;top:327px;width:88px;height:26px;"><span style="top:7px;left:2px;letter-spacing:-0.35px;">Reset Image</span></div>
<div class="btn" style="left:801px;top:327px;width:69px;height:26px;"><span style="top:7px;left:1px;letter-spacing:-0.28px;">Save Image</span></div>

<!-- MANIPULATIONS panel -->
<div class="grp" style="left:22px;top:364px;width:568px;height:168px;"></div>
<div class="lbl" style="left:33.4px;top:357px;letter-spacing:-0.42px;">MANIPULATIONS</div>
<div class="btn" style="left:38px;top:377px;width:76px;height:29px;"><span style="top:9px;letter-spacing:-0.25px;">Smouthing</span></div>
<div class="btn" style="left:126px;top:377px;width:76px;height:29px;"><span style="top:9px;">Negative</span></div>
<div class="btn" style="left:37px;top:412px;width:76px;height:27px;"><span style="top:8px;">Log</span></div>
<div class="btn" style="left:125px;top:413px;width:77px;height:27px;"><span style="top:8px;letter-spacing:-0.15px;">Binarization</span></div>
<div class="btn" style="left:80px;top:452px;width:72px;height:23px;"><span style="top:6px;">symmetry%y</span></div>
<div class="txt" style="left:43px;top:485px;">Luminance:</div>
<div class="abs" style="left:100px;top:486px;width:9px;height:14px;background:#d4d0c8;z-index:2;"></div>
<div class="txt" style="left:44px;top:512px;">Contrast:</div>
<div class="sl" style="left:102px;top:486px;width:115px;">
  <div class="sb" style="left:0;"></div><div class="sb" style="right:0;"></div><div class="th" style="left:48px;"></div>
  <svg class="abs" style="left:0;top:0" width="115" height="16"><path d="M9.5 4 L5.5 8 L9.5 12 Z M105.5 4 L109.5 8 L105.5 12 Z" fill="#383838"/></svg>
</div>
<div class="sl" style="left:102px;top:507px;width:115px;">
  <div class="sb" style="left:0;"></div><div class="sb" style="right:0;"></div><div class="th" style="left:47px;"></div>
  <svg class="abs" style="left:0;top:0" width="115" height="16"><path d="M9.5 4 L5.5 8 L9.5 12 Z M105.5 4 L109.5 8 L105.5 12 Z" fill="#383838"/></svg>
</div>

<!-- Pachymetry -->
<div class="grp" style="left:227px;top:377px;width:124px;height:145px;"></div>
<div class="lbl" style="left:239px;top:369px;">Pachymetry</div>
<div class="btn" style="left:239px;top:391px;width:101px;height:26px;"><span style="top:7px;">Value</span></div>
<div class="edit" style="left:253px;top:428px;width:81px;height:23px;line-height:24px;">453.474</div>
<div class="btn" style="left:269px;top:478px;width:34px;height:24px;"><span style="top:6px;left:1px;">click</span></div>

<div class="btn lav" style="left:484px;top:369px;width:89px;height:23px;font-weight:bold;"><span style="top:6px;letter-spacing:-0.3px;">HISTORIC</span></div>
<div class="txt" style="left:365px;top:453px;letter-spacing:-0.12px;">Consultation Date:</div>
<div class="edit" style="left:465px;top:442px;width:114px;height:26px;"></div>
<div class="txt" style="left:492px;top:449px;letter-spacing:-0.1px;">15/04/2022</div>
<div class="btn lav" style="left:393px;top:499px;width:96px;height:22px;"><span style="top:5px;letter-spacing:-0.45px;">REGISTRATION</span></div>
<div class="btn" style="left:502px;top:498px;width:74px;height:22px;"><span style="top:6px;">ROI</span></div>

<!-- Eye -->
<div class="grp" style="left:600px;top:366px;width:100px;height:86px;"></div>
<div class="lbl" style="left:612px;top:359px;">Eye</div>
<div class="radio" style="left:611px;top:382px;"></div>
<div class="txt" style="left:628px;top:383px;">Left</div>
<div class="radio on" style="left:615px;top:409px;"></div>
<div class="txt" style="left:632px;top:410px;letter-spacing:-0.2px;">Right</div>

<!-- File Number -->
<div class="grp" style="left:701px;top:372px;width:179px;height:81px;"></div>
<div class="lbl" style="left:713px;top:365px;letter-spacing:-0.4px;">File Number</div>
<div class="edit" style="left:716px;top:392px;width:69px;height:32px;"></div>
<div class="txt" style="left:738.5px;top:402px;letter-spacing:-0.4px;">105</div>
<div class="abs" style="left:756px;top:400px;width:1px;height:15px;background:#000;"></div>
<div class="btn" style="left:799px;top:396px;width:69px;height:23px;"><span style="top:6px;">Research</span></div>

<!-- Anomaly -->
<div class="grp" style="left:601px;top:461px;width:100px;height:79px;"></div>
<div class="lbl" style="left:613px;top:454px;letter-spacing:-0.25px;">Anomaly</div>
<div class="radio" style="left:616px;top:474px;"></div>
<div class="txt" style="left:633px;top:475px;letter-spacing:0.4px;">Yes</div>
<div class="radio on" style="left:620px;top:507px;"></div>
<div class="txt" style="left:637px;top:508px;">No</div>

<div class="btn lav" style="left:716px;top:462px;width:85px;height:22px;"><span style="top:5px;">SAVE</span></div>
<div class="btn" style="left:812px;top:464px;width:69px;height:22px;"><span style="top:5px;letter-spacing:-0.6px;">HOME</span></div>
<div class="btn" style="left:715px;top:503px;width:86px;height:22px;"><span style="top:6px;letter-spacing:-0.6px;">RESET</span></div>
<div class="btn lav" style="left:813px;top:503px;width:71px;height:21px;"><span style="top:5px;letter-spacing:-0.6px;">CLOSE</span></div>

<!-- bottom strip -->
<div class="abs" style="left:0;top:543px;width:898px;height:1px;background:#a8a49c;"></div>
<div class="abs" style="left:0;top:544px;width:898px;height:1px;background:#585858;"></div>
<div class="abs" style="left:0;top:545px;width:898px;height:1px;background:#efefef;"></div>
</body>
</html>
